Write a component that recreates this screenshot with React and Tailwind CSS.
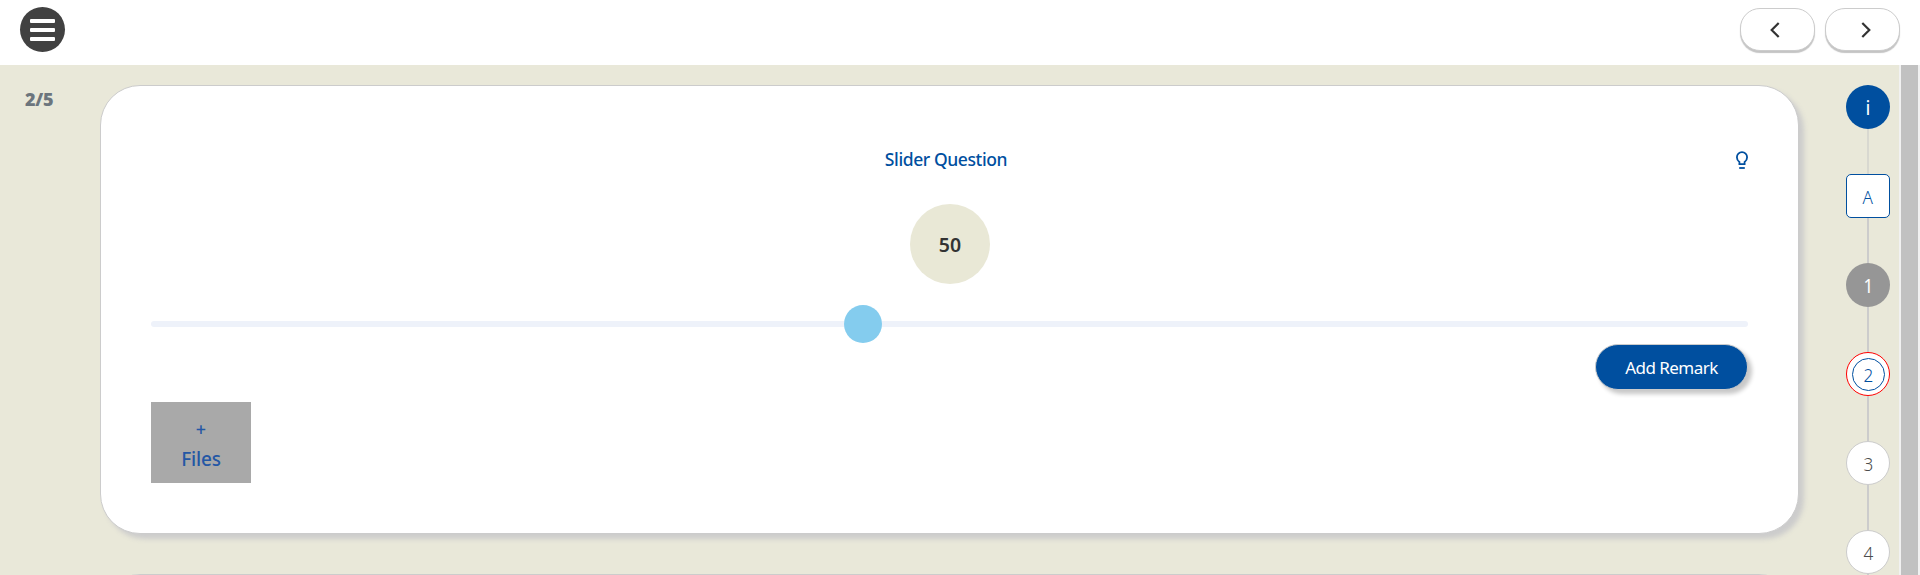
import React from "react";

function NavButton({ d, shift }) {
  return (
    <button className="flex h-[43px] w-[75px] items-center justify-center rounded-[20px] border border-[#ccc] bg-white shadow-[0_2px_1px_#c4c4c4]">
      <svg width="10" height="16" viewBox="0 0 10 16" fill="none" stroke="#333" strokeWidth="2.2" className={shift}>
        <path d={d} />
      </svg>
    </button>
  );
}

const line = "h-[45px] w-[2px] shrink-0 bg-[#ccc]";
const dot = "flex size-[44px] shrink-0 items-center justify-center rounded-full text-[19px] font-light leading-none";
const glyph = "mt-[2px] scale-x-90";

function Timeline() {
  return (
    <nav className="flex w-[62px] flex-col items-center pt-5">
      <div className={`${dot} bg-[#004f9f] text-white`}><span className="mt-[2px] font-normal">i</span></div>
      <div className="h-[45px] w-[2px] shrink-0 bg-[#d8d8d0]" />
      <div className="flex size-[44px] shrink-0 items-center justify-center rounded-[5px] border border-[#004f9f] bg-white text-[19px] font-light leading-none text-[#004f9f]">
        <span className={glyph}>A</span>
      </div>
      <div className={line} />
      <div className={`${dot} bg-[#969696] text-white`}><span className="mt-[2px] scale-x-90 font-normal">1</span></div>
      <div className={line} />
      <div className={`${dot} border border-[#f00] bg-white text-[#004f9f]`}>
        <div className="flex size-[33px] items-center justify-center rounded-full border border-[#004f9f]">
          <span className={glyph}>2</span>
        </div>
      </div>
      <div className={line} />
      <div className={`${dot} border border-[#ccc] bg-white text-[#4c4c4c]`}><span className={glyph}>3</span></div>
      <div className={line} />
      <div className={`${dot} border border-[#ccc] bg-white text-[#4c4c4c]`}><span className={glyph}>4</span></div>
      <div className={line} />
    </nav>
  );
}

function QuestionCard() {
  return (
    <section className="flex h-[449px] shrink-0 flex-col rounded-[40px] border border-[#ccc] bg-white px-[50px] shadow-[5px_5px_5px_#ccc]">
      <div className="mt-[60px] flex h-[26px] items-center">
        <h1 className="flex-1 pl-[5px] text-center text-[17.5px] font-medium leading-[26px] tracking-[-0.4px] text-[#004f9f]">Slider Question</h1>
        <svg width="12" height="18" viewBox="0 0 12 18" fill="none" stroke="#004f9f" strokeWidth="1.8" className="mt-[2px]">
          <path d="M3.4 13.2V11C1.8 9.8.9 8.3.9 6.2a5.1 5.1 0 0 1 10.2 0c0 2.1-.9 3.6-2.5 4.8v2.2z" />
          <path d="M3.2 17h5.6" />
        </svg>
      </div>
      <div className="ml-[759px] mt-[32px] flex size-[80px] shrink-0 items-center justify-center rounded-full bg-[#e9e8d6] text-[19.5px] font-semibold text-[#333]">
        <span className="mt-[2px]">50</span>
      </div>
      <div className="mt-[21px] flex h-[38px] shrink-0 items-center">
        <div className="h-[6px] w-[696px] rounded-l-full bg-[#eef2fa]" />
        <div className="z-10 -mx-[3px] size-[38px] rounded-full bg-[#84ccee]" />
        <div className="h-[6px] flex-1 rounded-r-full bg-[#eef2fa]" />
      </div>
      <button className="mt-px flex h-[46px] w-[153px] shrink-0 items-center justify-center self-end rounded-full border border-[#ccc] bg-[#004f9f] text-[17px] tracking-[-0.55px] text-white shadow-[4px_4px_4px_#c8c8c8]">
        <span className="mt-px">Add Remark</span>
      </button>
      <button className="mt-[12px] flex h-[81px] w-[100px] shrink-0 flex-col items-center bg-[#a9a9a9] pt-[13px] font-medium text-[#2457a5]">
        <span className="text-[18px] leading-[29px]">+</span>
        <span className="text-[19px] leading-[30px] tracking-[-0.2px]">Files</span>
      </button>
    </section>
  );
}

export default function App() {
  return (
    <div className="flex h-[575px] flex-col overflow-hidden bg-white font-['Noto_Sans',sans-serif]">
      <header className="flex h-[65px] shrink-0 items-start justify-between px-5">
        <button className="mt-[7px] flex size-[45px] flex-col items-center justify-center gap-[5px] rounded-full bg-[#414141]">
          <span className="h-[4px] w-[25px] rounded-[1px] bg-white" />
          <span className="h-[4px] w-[25px] rounded-[1px] bg-white" />
          <span className="h-[4px] w-[25px] rounded-[1px] bg-white" />
        </button>
        <div className="mt-2 flex gap-[10px]">
          <NavButton d="M8.7 1 1.7 8l7 7" shift="mr-[6px] mt-px" />
          <NavButton d="m1.3 1 7 7-7 7" shift="ml-[6px] mt-px" />
        </div>
      </header>
      <main className="flex min-h-0 flex-1">
        <div className="flex min-w-0 flex-1 overflow-hidden bg-[#e9e8d9]">
          <aside className="w-[100px] shrink-0 pl-[25px] pt-[21px] text-[18px] font-black leading-[26px] tracking-[-0.2px] text-[#6c757d]">2/5</aside>
          <div className="flex w-[1699px] shrink-0 flex-col gap-[40px] pt-5">
            <QuestionCard />
            <section className="h-[300px] shrink-0 rounded-[40px] border border-[#ccc] bg-white" />
          </div>
          <div className="ml-[38px]"><Timeline /></div>
        </div>
        <div className="w-[21px] shrink-0 bg-[#f1f1f1] px-[2px]">
          <div className="h-full bg-[#c1c1c1]" />
        </div>
      </main>
    </div>
  );
}
